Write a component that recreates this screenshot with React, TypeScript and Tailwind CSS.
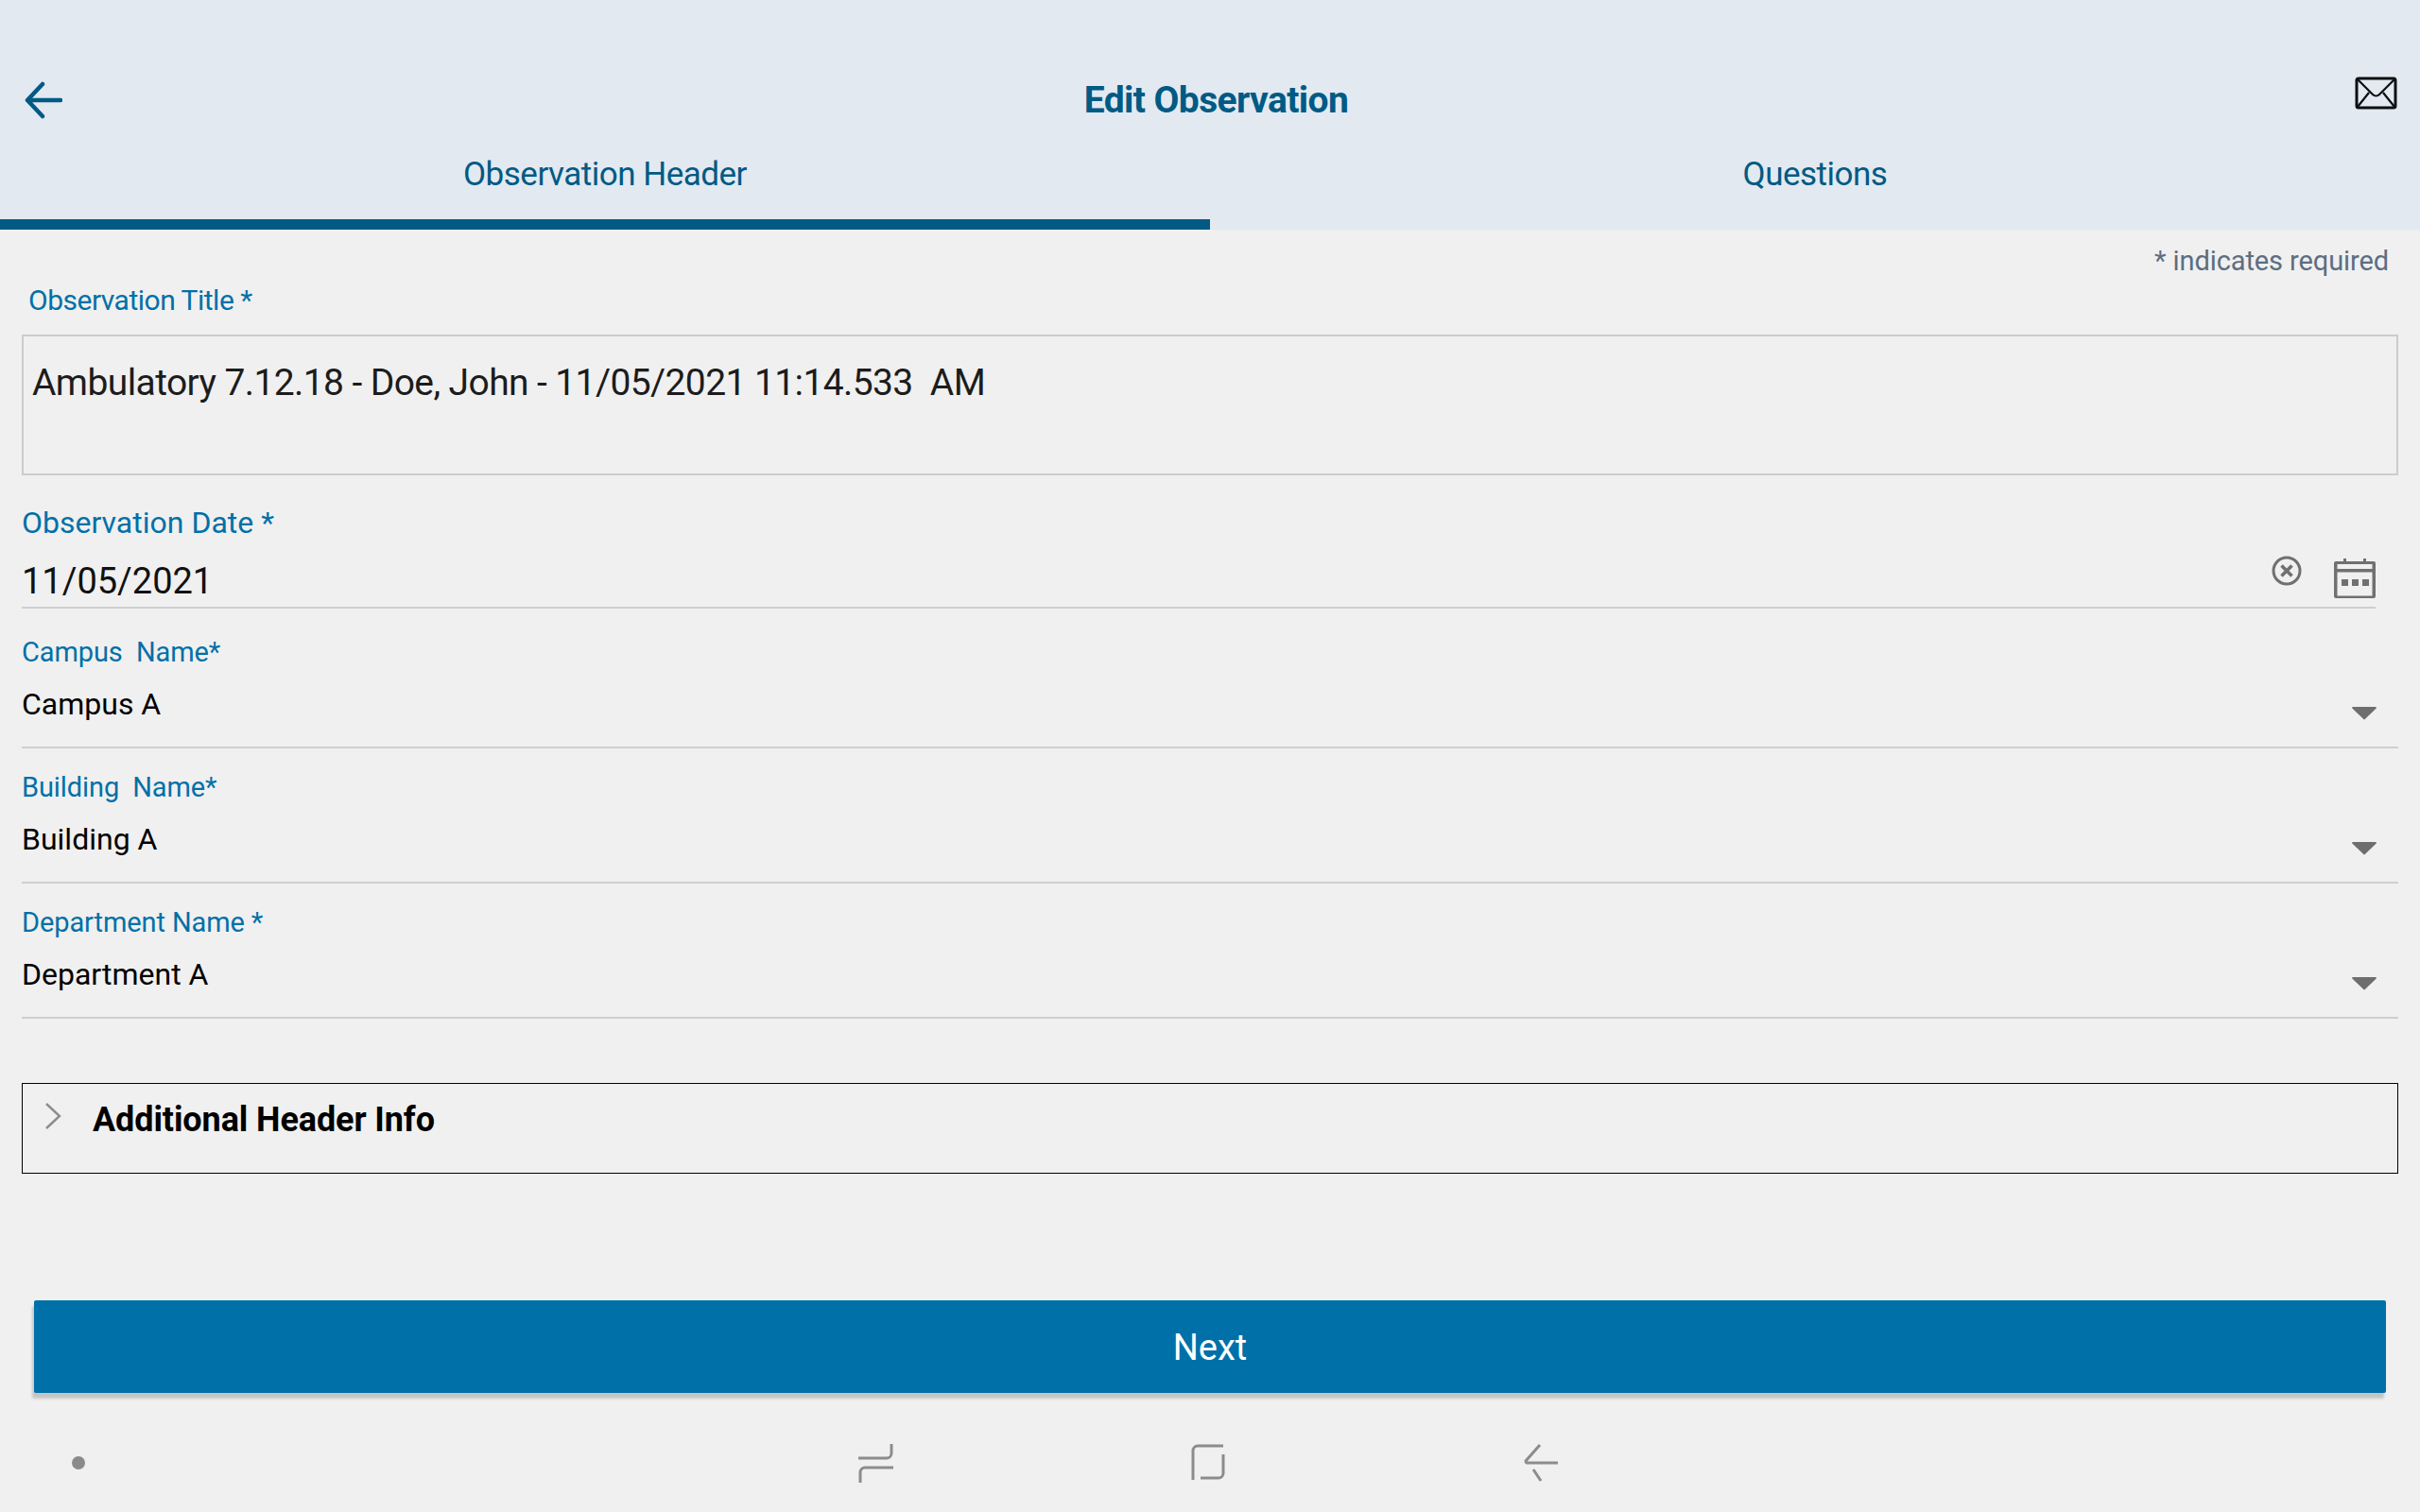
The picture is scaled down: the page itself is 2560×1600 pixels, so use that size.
import React from "react";

const font = "font-['Roboto',sans-serif]";

// Dropdown row (Campus, Building, Department)
const SelectField: React.FC<{ label: string; value: string }> = ({ label, value }) => {
  return (
    <div className="h-[143px] pt-[21px] border-b-2 border-[#cfcfcf] relative">
      <div className="h-[40px] leading-[40px] text-[29px] tracking-[-0.1px] text-[#0070a8] whitespace-pre">{label}</div>
      <div className="h-[40px] leading-[40px] mt-[15px] text-[32px] text-black">{value}</div>
      <svg className="absolute right-[23px] top-[98px]" width="26" height="15" viewBox="0 0 26 15">
        <path d="M1 1h24a1 1 0 0 1 .7 1.6L13.8 14a1 1 0 0 1-1.5 0L.3 2.6A1 1 0 0 1 1 1z" fill="#6e6e6e" />
      </svg>
    </div>
  );
};

export default function App() {
  return (
    <div className={`w-[2560px] h-[1600px] bg-[#f0f0f0] overflow-hidden ${font}`}>
      {/* Header */}
      <div className="h-[243px] bg-[#e2e9f1] relative">
        <div className="h-[153px] flex items-end justify-center pb-[25px] pl-[13px]">
          <span className="text-[39px] leading-[44px] font-bold text-[#005a84] tracking-[-0.6px]">Edit Observation</span>
        </div>
        <svg className="absolute left-[26px] top-[86px]" width="40" height="40" viewBox="0 0 40 40" fill="none" stroke="#005a84" strokeWidth="4.5" strokeLinecap="round" strokeLinejoin="round">
          <path d="M38 20H3M19 3L3 20l16 17" />
        </svg>
        <svg className="absolute left-[2491px] top-[81px]" width="46" height="36" viewBox="0 0 46 36" fill="none" stroke="#0a0f12" strokeWidth="3" strokeLinejoin="round">
          <rect x="2" y="2" width="41" height="31" rx="2" />
          <path d="M3 3l16 16c2 2 5 2 7 0L42 3M3 32l12-15M42 32L30 17" strokeWidth="2.2" />
        </svg>
        <div className="flex h-[90px]">
          <div className="w-[1280px] border-b-[11px] border-[#005a84] text-center text-[35px] leading-[46px] pt-[9px] text-[#005a84] tracking-[-0.5px]">
            Observation Header
          </div>
          <div className="w-[1280px] text-center text-[35px] leading-[46px] pt-[9px] text-[#005a84] tracking-[-0.5px]">Questions</div>
        </div>
      </div>

      {/* Form */}
      <div className="pl-[23px] pr-[23px]">
        <div className="h-[52px] pt-[16px] pr-[10px] text-right text-[29px] leading-[34px] text-[#5b6e82] tracking-[-0.1px]">* indicates required</div>
        <div className="h-[59px] pl-[7px] pt-[1px] text-[30px] leading-[44px] text-[#0070a8] tracking-[-0.5px]">Observation Title *</div>
        <div className="h-[149px] border-2 border-[#cccccc] pl-[9px] pt-[21px] text-[39px] leading-[56px] text-[#1c1c1c] tracking-[-0.6px] whitespace-pre">
          Ambulatory 7.12.18 - Doe, John - 11/05/2021 11:14.533  AM
        </div>

        {/* Date */}
        <div className="h-[141px] mb-[5px] border-b-2 border-[#cfcfcf] mr-[24px] relative">
          <div className="pt-[29px] h-[81px] text-[32px] leading-[42px] text-[#0070a8]">Observation Date *</div>
          <div className="text-[38px] leading-[50px] mt-[6px] text-[#111111]">11/05/2021</div>
          <svg className="absolute right-[78px] top-[85px]" width="32" height="32" viewBox="0 0 32 32" fill="none" stroke="#707070">
            <circle cx="16" cy="16" r="14" strokeWidth="3" />
            <path d="M10.5 10.5l11 11M21.5 10.5l-11 11" strokeWidth="3.6" />
          </svg>
          <svg className="absolute right-0 top-[87px]" width="44" height="44" viewBox="0 0 44 44" fill="#707070">
            <path d="M2 4h8V1h3v3h18V1h3v3h8a2 2 0 0 1 2 2v35a2 2 0 0 1-2 2H2a2 2 0 0 1-2-2V6a2 2 0 0 1 2-2zm1.500 3v5h37V7h-37zm0 8.500v25h37v-25h-37z" />
            <rect x="8" y="23" width="7" height="7" />
            <rect x="19" y="23" width="7" height="7" />
            <rect x="30" y="23" width="7" height="7" />
          </svg>
        </div>

        <SelectField label="Campus  Name*" value="Campus A" />
        <SelectField label="Building  Name*" value="Building A" />
        <SelectField label="Department Name *" value="Department A" />

        {/* Accordion */}
        <div className="mt-[68px] h-[96px] border border-black flex pl-[23px] pt-[17px]">
          <svg className="mt-[2px]" width="18" height="30" viewBox="0 0 18 30" fill="none" stroke="#8c8c8c" strokeWidth="2.4">
            <path d="M2 2l14 13L2 28" />
          </svg>
          <span className="ml-[33px] text-[36px] leading-[42px] font-bold text-black tracking-[-0.1px]">Additional Header Info</span>
        </div>

        {/* Next */}
        <button
          type="button"
          className="block mt-[134px] ml-[13px] w-[2488px] h-[98px] pt-[3px] rounded-[2px] bg-[#0070a8] text-white text-[38px] shadow-[-2px_6px_3px_rgba(0,0,0,0.18)]"
        >
          Next
        </button>
      </div>

      {/* Android nav bar */}
      <div className="relative h-[126px]">
        <div className="absolute left-[76px] top-[67px] w-[14px] h-[14px] rounded-full bg-[#8a8a8a]" />
        <svg className="absolute left-[905px] top-[53px]" width="44" height="44" viewBox="0 0 44 44" fill="none" stroke="#8c8c8c" strokeWidth="3">
          <path d="M3 16h30a5 5 0 0 0 5-5V1M40 26H10a5 5 0 0 0-5 5v11" />
        </svg>
        <svg className="absolute left-[1258px] top-[54px]" width="40" height="40" viewBox="0 0 40 40" fill="none" stroke="#8c8c8c" strokeWidth="3">
          <path d="M4 38V7a5 5 0 0 1 5-5h27M12 36h19a5 5 0 0 0 5-5V11" />
        </svg>
        <svg className="absolute left-[1610px] top-[53px]" width="40" height="42" viewBox="0 0 40 42" fill="none" stroke="#8c8c8c" strokeWidth="3">
          <path d="M19 2L4 19a2 2 0 0 0 1 2h33M12 28l8 12" />
        </svg>
      </div>
    </div>
  );
}
